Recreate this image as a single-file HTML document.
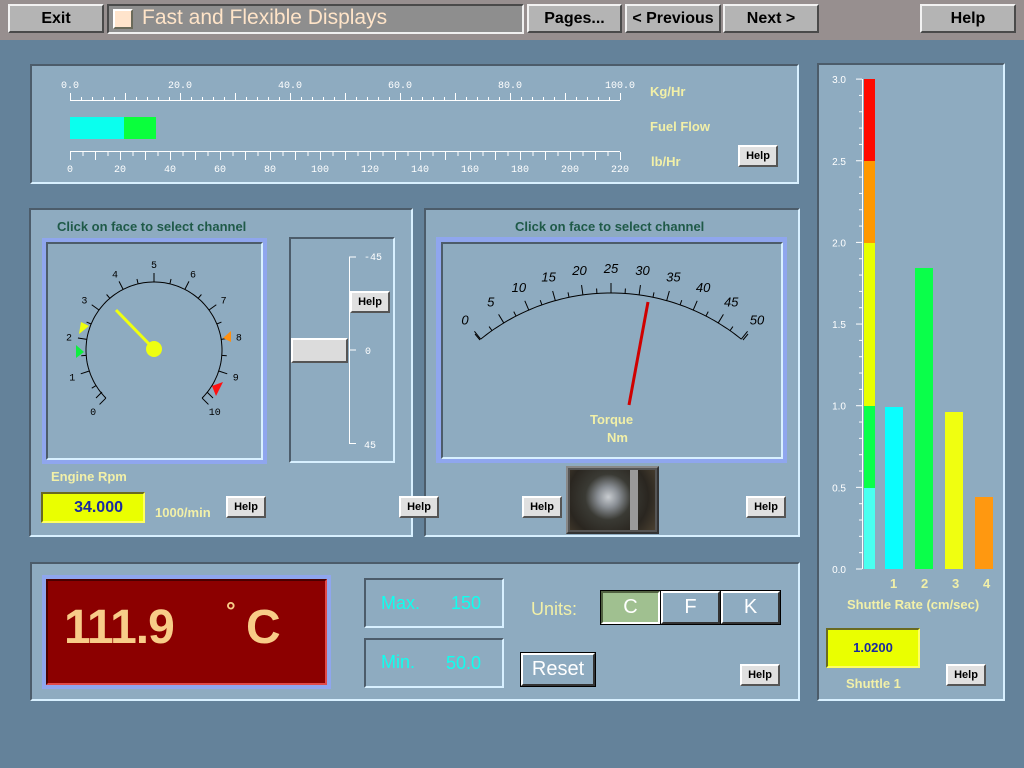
<!DOCTYPE html>
<html><head><meta charset="utf-8"><style>
*{margin:0;padding:0;box-sizing:border-box}
body{width:1024px;height:768px;background:#64829a;position:relative;overflow:hidden;font-family:"Liberation Sans",sans-serif}
.a{position:absolute}
.top{left:0;top:0;width:1024px;height:40px;background:#978f8f}
.tb{position:absolute;top:4px;height:29px;background:#b4b4b4;border:2px solid;border-color:#f2f2f2 #4a4a4a #4a4a4a #f2f2f2;font:bold 16px "Liberation Sans",sans-serif;color:#000;text-align:center;line-height:25px}
.pan{position:absolute;background:#8eabc0;border:2px solid;border-color:#4c5c6a #d8f0ff #d8f0ff #4c5c6a}
.hb{position:absolute;width:40px;height:22px;background:#e0e0e0;border:2px solid;border-color:#fff #555 #555 #fff;font:bold 11px "Liberation Sans",sans-serif;text-align:center;line-height:18px;color:#000}
.y{color:#f2f0a8;font-weight:bold;font-size:13px}
.g{color:#1f5a48;font-weight:bold;font-size:13px}
svg{position:absolute;left:0;top:0}
</style></head><body>
<div class="a top"></div>
<div class="tb" style="left:8px;width:96px">Exit</div>
<div class="a" style="left:107px;top:4px;width:417px;height:30px;background:#8e8e8e;border:2px solid;border-color:#4a4a4a #f0f0f0 #f0f0f0 #4a4a4a"></div>
<div class="a" style="left:113px;top:9px;width:20px;height:20px;background:#ffe4cc;border:2px solid;border-color:#fff #6a6a5a #6a6a5a #fff"></div>
<div class="a" style="left:142px;top:6px;font-size:21px;color:#ffe4c8">Fast and Flexible Displays</div>
<div class="tb" style="left:527px;width:95px">Pages...</div>
<div class="tb" style="left:625px;width:96px">&lt; Previous</div>
<div class="tb" style="left:723px;width:96px">Next &gt;</div>
<div class="tb" style="left:920px;width:96px">Help</div>

<div class="pan" style="left:30px;top:64px;width:769px;height:120px"></div>
<div class="pan" style="left:29px;top:208px;width:384px;height:329px"></div>
<div class="pan" style="left:424px;top:208px;width:376px;height:329px"></div>
<div class="pan" style="left:30px;top:562px;width:770px;height:139px"></div>
<div class="pan" style="left:817px;top:63px;width:188px;height:638px"></div>

<!-- fuel -->
<div class="a" style="left:70px;top:117px;width:54px;height:22px;background:#0affee"></div>
<div class="a" style="left:124px;top:117px;width:32px;height:22px;background:#0aff3c"></div>
<div class="a y" style="left:650px;top:84px">Kg/Hr</div>
<div class="a y" style="left:650px;top:119px">Fuel Flow</div>
<div class="a y" style="left:651px;top:154px">lb/Hr</div>
<div class="hb" style="left:738px;top:145px">Help</div>

<!-- gauge frame -->
<div class="a g" style="left:57px;top:219px">Click on face to select channel</div>
<div class="a" style="left:42px;top:238px;width:225px;height:226px;background:#8fa6ee"></div>
<div class="a" style="left:46px;top:242px;width:217px;height:218px;background:#8eabc0;border:2px solid;border-color:#4c5c6a #d8f0ff #d8f0ff #4c5c6a"></div>
<div class="a" style="left:289px;top:237px;width:106px;height:226px;border:2px solid;border-color:#4c5c6a #d8f0ff #d8f0ff #4c5c6a"></div>
<div class="a" style="left:291px;top:338px;width:57px;height:25px;background:#dcdcdc;border:2px solid;border-color:#fff #555 #555 #fff"></div>
<div class="hb" style="left:350px;top:291px">Help</div>
<div class="a y" style="left:51px;top:469px">Engine Rpm</div>
<div class="a" style="left:41px;top:492px;width:104px;height:31px;background:#eaff00;border:2px solid;border-color:#6a6a20 #ffff60 #ffff60 #6a6a20;color:#1a2aa0;font:bold 16px 'Liberation Sans',sans-serif;text-align:right;padding-right:20px;line-height:27px">34.000</div>
<div class="a y" style="left:155px;top:505px">1000/min</div>
<div class="hb" style="left:226px;top:496px">Help</div>
<div class="hb" style="left:399px;top:496px">Help</div>

<!-- meter -->
<div class="a g" style="left:515px;top:219px">Click on face to select channel</div>
<div class="a" style="left:436px;top:237px;width:351px;height:226px;background:#8fa6ee"></div>
<div class="a" style="left:441px;top:242px;width:342px;height:217px;background:#8eabc0;border:2px solid;border-color:#4c5c6a #d8f0ff #d8f0ff #4c5c6a"></div>
<div class="a y" style="left:590px;top:412px">Torque</div>
<div class="a y" style="left:607px;top:430px">Nm</div>
<div class="a" style="left:566px;top:466px;width:93px;height:68px;background:#555;border:2px solid;border-color:#888 #333 #333 #888;overflow:hidden">
<div class="a" style="left:2px;top:2px;width:85px;height:60px;background:radial-gradient(circle at 45% 45%,#c8ccd0 0,#8a8f95 18%,#3a3a34 40%,#2a2620 70%,#4a4030 100%)"></div>
<div class="a" style="left:62px;top:2px;width:8px;height:60px;background:#9a9a9a"></div>
</div>
<div class="hb" style="left:522px;top:496px">Help</div>
<div class="hb" style="left:746px;top:496px">Help</div>

<!-- temperature -->
<div class="a" style="left:42px;top:575px;width:289px;height:114px;background:#8fa6ee"></div>
<div class="a" style="left:46px;top:579px;width:281px;height:106px;background:#8c0000;border:2px solid;border-color:#4a0000 #e04a4a #e04a4a #4a0000"></div>
<div class="a" style="left:64px;top:600px;font:bold 48px 'Liberation Sans',sans-serif;color:#f8cc88;letter-spacing:-1px">111.9</div>
<div class="a" style="left:226px;top:598px;font:bold 24px 'Liberation Sans',sans-serif;color:#f8cc88">°</div>
<div class="a" style="left:246px;top:600px;font:bold 48px 'Liberation Sans',sans-serif;color:#f8cc88">C</div>
<div class="a" style="left:364px;top:578px;width:140px;height:50px;border:2px solid;border-color:#4c5c6a #d8f0ff #d8f0ff #4c5c6a"></div>
<div class="a" style="left:364px;top:638px;width:140px;height:50px;border:2px solid;border-color:#4c5c6a #d8f0ff #d8f0ff #4c5c6a"></div>
<div class="a" style="left:381px;top:593px;color:#10ffee;font-size:18px">Max.</div>
<div class="a" style="left:451px;top:593px;color:#10ffee;font-size:18px">150</div>
<div class="a" style="left:381px;top:652px;color:#10ffee;font-size:18px">Min.</div>
<div class="a" style="left:446px;top:653px;color:#10ffee;font-size:18px">50.0</div>
<div class="a" style="left:531px;top:599px;color:#f2f0a8;font-size:18px">Units:</div>
<div class="a" style="left:600px;top:590px;width:181px;height:35px;background:#000"></div>
<div class="a" style="left:601px;top:591px;width:59px;height:33px;background:#a0c090;border:2px solid;border-color:#506040 #fff #fff #506040;color:#fff;font-size:20px;text-align:center;line-height:29px">C</div>
<div class="a" style="left:661px;top:591px;width:59px;height:33px;background:#8eabc0;border:2px solid;border-color:#fff #333 #333 #fff;color:#fff;font-size:20px;text-align:center;line-height:29px">F</div>
<div class="a" style="left:721px;top:591px;width:59px;height:33px;background:#8eabc0;border:2px solid;border-color:#fff #333 #333 #fff;color:#fff;font-size:20px;text-align:center;line-height:29px">K</div>
<div class="a" style="left:520px;top:652px;width:76px;height:35px;background:#000;padding:1px"><div style="width:74px;height:33px;background:#8eabc0;border:2px solid;border-color:#fff #333 #333 #fff;color:#fff;font-size:20px;text-align:center;line-height:29px">Reset</div></div>
<div class="hb" style="left:740px;top:664px">Help</div>

<!-- chart -->
<div class="a" style="left:864px;top:79px;width:11px;height:82px;background:#ff0a00"></div>
<div class="a" style="left:864px;top:161px;width:11px;height:82px;background:#ff9800"></div>
<div class="a" style="left:864px;top:243px;width:11px;height:163px;background:#e8ff00"></div>
<div class="a" style="left:864px;top:406px;width:11px;height:82px;background:#0aff4a"></div>
<div class="a" style="left:864px;top:488px;width:11px;height:81px;background:#4afff0"></div>
<div class="a" style="left:885px;top:407px;width:18px;height:162px;background:#0affff"></div>
<div class="a" style="left:915px;top:268px;width:18px;height:301px;background:#0aff4a"></div>
<div class="a" style="left:945px;top:412px;width:18px;height:157px;background:#f0ff10"></div>
<div class="a" style="left:975px;top:497px;width:18px;height:72px;background:#ff9810"></div>
<div class="a y" style="left:890px;top:576px;font-size:13px">1</div>
<div class="a y" style="left:921px;top:576px;font-size:13px">2</div>
<div class="a y" style="left:952px;top:576px;font-size:13px">3</div>
<div class="a y" style="left:983px;top:576px;font-size:13px">4</div>
<div class="a y" style="left:847px;top:597px">Shuttle Rate (cm/sec)</div>
<div class="a" style="left:826px;top:628px;width:94px;height:40px;background:#eaff00;border:2px solid;border-color:#6a6a20 #ffff60 #ffff60 #6a6a20;color:#1a2aa0;font:bold 13px 'Liberation Sans',sans-serif;text-align:center;line-height:36px">1.0200</div>
<div class="a y" style="left:846px;top:676px">Shuttle 1</div>
<div class="hb" style="left:946px;top:664px">Help</div>

<svg id="s" width="1024" height="768" xmlns="http://www.w3.org/2000/svg"></svg>
<script>
var o='';
function L(a,b,c,d,col,w){o+='<line x1="'+a+'" y1="'+b+'" x2="'+c+'" y2="'+d+'" stroke="'+col+'" stroke-width="'+(w||1)+'"/>';}
function T(x,y,t,col,sz,anc,extra){o+='<text x="'+x+'" y="'+y+'" fill="'+col+'" font-size="'+sz+'" text-anchor="'+(anc||'middle')+'" font-family="Liberation Mono, monospace" '+(extra||'')+'>'+t+'</text>';}
// fuel top scale 0-100 x70-620
L(70,100.5,620,100.5,'#fff');
for(var i=0;i<=50;i++){var x=70+i*11;var big=i%5==0;L(x+.5,big?93:97,x+.5,100,'#fff');if(i%10==0)T(x,88,(i*2).toFixed(1),'#fff',10);}
// lower scale 0-220
L(70,151.5,620,151.5,'#fff');
for(var i=0;i<=44;i++){var x=70+i*12.5;var big=i%2==0;L(x+.5,152,x+.5,big?160:156,'#fff');if(i%4==0)T(x,172,i*5,'#fff',10);}
// gauge
var cx=154,cy=350,R=68;
var p='';for(var a=-135;a<=135;a+=2){var r=a*Math.PI/180;p+=(a==-135?'M':'L')+(cx+R*Math.sin(r)).toFixed(1)+' '+(cy-R*Math.cos(r)).toFixed(1);}
o+='<path d="'+p+'" fill="none" stroke="#000"/>';
for(var i=0;i<=20;i++){var a=(-135+i*13.5)*Math.PI/180;var r2=i%2==0?R+9:R+5;L(cx+R*Math.sin(a),cy-R*Math.cos(a),cx+r2*Math.sin(a),cy-r2*Math.cos(a),'#000');
if(i%2==0){T(cx+86*Math.sin(a),cy-86*Math.cos(a)+4,i/2,'#000',10);}}
L(102,392,96,398,'#000');L(207,392,213,398,'#000');
o+='<polygon points="79,334 89,326 81,322" fill="#eeff10"/>';
o+='<polygon points="76,345 84,352 76,358" fill="#10ee40"/>';
o+='<polygon points="231,331 223,338 231,342" fill="#ff9010"/>';
o+='<polygon points="212,386 223,382 216,396" fill="#ff1010"/>';
L(116,310,152,347,'#eeff10',3);o+='<circle cx="154" cy="349" r="8" fill="#eeff10"/>';
// slider scale
L(349.5,257,349.5,444,'#fff');L(349,257,356,257,'#fff');L(349,350,356,350,'#fff');L(349,443.5,356,443.5,'#fff');
T(373,260,'-45','#fff',10);T(368,354,'0','#fff',10);T(370,448,'45','#fff',10);
// meter
var mx=611,my=500,MR=207;
p='';for(var a=-39;a<=39;a+=1){var r=a*Math.PI/180;p+=(a==-39?'M':'L')+(mx+MR*Math.sin(r)).toFixed(1)+' '+(my-MR*Math.cos(r)).toFixed(1);}
o+='<path d="'+p+'" fill="none" stroke="#000"/>';
for(var i=0;i<=20;i++){var a=(-39+i*3.9)*Math.PI/180;var r2=i%2==0?MR+10:MR+5;if(i==10)r2=MR+10;L(mx+MR*Math.sin(a),my-MR*Math.cos(a),mx+r2*Math.sin(a),my-r2*Math.cos(a),'#000');
if(i%2==0){var lr=MR+25;o+='<text x="'+(mx+lr*Math.sin(a)).toFixed(1)+'" y="'+(my-lr*Math.cos(a)+5).toFixed(1)+'" font-size="13" font-style="italic" text-anchor="middle" font-family="Liberation Sans, sans-serif" fill="#000">'+(i*2.5)+'</text>';}}
L(480,340,475,334,'#000');L(743,340,748,334,'#000');
L(629,405,648,302,'#d00000',3);
// chart axis
L(862.5,79,862.5,569,'#fff');
for(var i=0;i<=30;i++){var y=569-i*16.33;var big=i%5==0;L(big?856:859,y,862,y,'#fff');if(big)o+='<text x="846" y="'+(y+4)+'" fill="#fff" font-size="10" text-anchor="end" font-family="Liberation Sans, sans-serif">'+(i/10).toFixed(1)+'</text>';}
document.getElementById('s').innerHTML=o;
</script>
</body></html>
